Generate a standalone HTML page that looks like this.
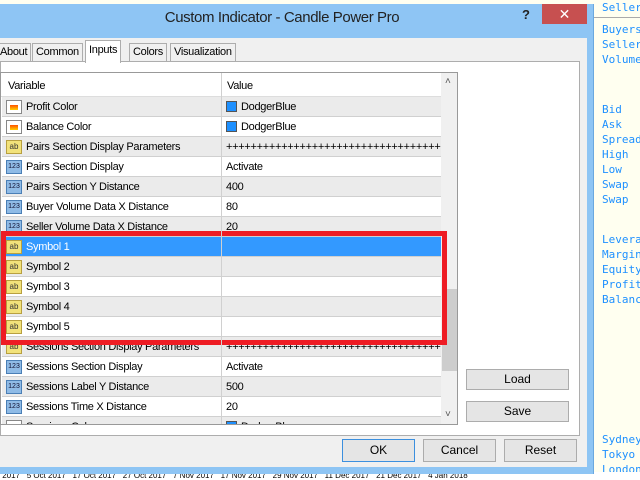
<!DOCTYPE html>
<html><head><style>
*{margin:0;padding:0;box-sizing:border-box}
body{width:640px;height:480px;overflow:hidden;position:relative;background:#fffff0;font-family:"Liberation Sans",sans-serif;font-size:11px;color:#000}
.a{position:absolute}
.chart div{position:absolute;left:602px;font-family:"DejaVu Sans Mono","Liberation Mono",monospace;font-size:11px;color:#1e90ff;white-space:nowrap}
.row{position:absolute;left:1px;width:439px;height:20px;border-bottom:1px solid #d0d0d0;letter-spacing:-0.3px}
.row .n{position:absolute;left:24px;top:4px;white-space:nowrap}
.row .v{position:absolute;left:224px;top:4px;white-space:nowrap}
.row .ic{position:absolute;left:4px;top:3px;width:16px;height:14px;letter-spacing:0}
.ab{background:#f2e27a;border:1px solid #b8a040;font-size:8px;line-height:11px;text-align:center;color:#333}
.n123{background:#8fbbe6;border:1px solid #4a7fb6;font-size:7px;line-height:11px;text-align:center;color:#113}
.col{background:#fff;border:1px solid #888}
.col:after{content:"";position:absolute;left:3px;top:4px;width:8px;height:5px;background:linear-gradient(#ff5000,#ffd000)}
.sw{display:inline-block;width:11px;height:11px;background:#1e90ff;border:1px solid #555;vertical-align:-2px;margin-right:4px}
.btn{position:absolute;background:#e5e5e5;border:1px solid #acacac;text-align:center;line-height:19px;font-size:12px}
.tab{position:absolute;top:43px;height:19px;border:1px solid #adadad;background:#f0f0f0;padding:0 3px;line-height:17px;font-size:11px;letter-spacing:-0.3px}
</style></head><body>
<div class="chart">
<div style="top:1px">Seller</div>
<div class="a" style="left:594px;top:17px;width:46px;height:1px;background:#aaa"></div>
<div style="top:23px">Buyers</div><div style="top:38px">Seller</div><div style="top:53px">Volume</div>
<div style="top:103px">Bid</div><div style="top:118px">Ask</div><div style="top:133px">Spread</div><div style="top:148px">High</div><div style="top:163px">Low</div><div style="top:178px">Swap</div><div style="top:193px">Swap</div>
<div style="top:233px">Leverage</div><div style="top:248px">Margin</div><div style="top:263px">Equity</div><div style="top:278px">Profit</div><div style="top:293px">Balance</div>
<div style="top:433px">Sydney</div><div style="top:448px">Tokyo</div><div style="top:463px">London</div>
</div>
<div class="a" style="left:0;top:472px;width:640px;height:8px;background:#fff;font-size:8px;line-height:8px;color:#000;white-space:nowrap;overflow:hidden">&nbsp;2017 &nbsp; 5 Oct 2017 &nbsp; 17 Oct 2017 &nbsp; 27 Oct 2017 &nbsp; 7 Nov 2017 &nbsp; 17 Nov 2017 &nbsp; 29 Nov 2017 &nbsp; 11 Dec 2017 &nbsp; 21 Dec 2017 &nbsp; 4 Jan 2018</div>
<div class="a" style="left:0;top:4px;width:594px;height:470px;background:#8ec5f4;border-right:1px solid #6aa8df"></div>
<div class="a" style="left:0;top:9px;width:564px;text-align:center;font-size:15px;color:#222;letter-spacing:-0.4px">Custom Indicator - Candle Power Pro</div>
<div class="a" style="left:522px;top:7px;font-size:13px;font-weight:bold;color:#222">?</div>
<div class="a" style="left:542px;top:4px;width:45px;height:20px;background:#c75050;color:#fff;text-align:center;font-size:14px;line-height:20px">✕</div>
<div class="a" style="left:0;top:38px;width:587px;height:429px;background:#f0f0f0"></div>
<div class="a" style="left:0;top:61px;width:580px;height:375px;background:#fff;border:1px solid #adadad"></div>
<div class="tab" style="left:-4px">About</div>
<div class="tab" style="left:32px">Common</div>
<div class="tab" style="left:85px;top:40px;height:23px;background:#fff;border-bottom:none;padding-top:1px">Inputs</div>
<div class="tab" style="left:129px">Colors</div>
<div class="tab" style="left:170px">Visualization</div>
<div class="a" style="left:0;top:72px;width:458px;height:353px;border:1px solid #999;background:#fff;overflow:hidden">
<div class="a" style="left:0;top:0;width:440px;height:24px;border-bottom:1px solid #ddd;background:#fff;letter-spacing:-0.3px"><span class="a" style="left:7px;top:7px">Variable</span><span class="a" style="left:226px;top:7px">Value</span></div>
<div class="a" style="left:220px;top:0;width:1px;height:360px;background:#d0d0d0;z-index:2"></div>
<div class="row" style="top:24px;background:#ebebeb"><div class="ic col"></div><span class="n">Profit Color</span><span class="v"><i class="sw"></i>DodgerBlue</span></div>
<div class="row" style="top:44px"><div class="ic col"></div><span class="n">Balance Color</span><span class="v"><i class="sw"></i>DodgerBlue</span></div>
<div class="row" style="top:64px;background:#ebebeb"><div class="ic ab">ab</div><span class="n">Pairs Section Display Parameters</span><span class="v">++++++++++++++++++++++++++++++++++++</span></div>
<div class="row" style="top:84px"><div class="ic n123">123</div><span class="n">Pairs Section Display</span><span class="v">Activate</span></div>
<div class="row" style="top:104px;background:#ebebeb"><div class="ic n123">123</div><span class="n">Pairs Section Y Distance</span><span class="v">400</span></div>
<div class="row" style="top:124px"><div class="ic n123">123</div><span class="n">Buyer Volume Data X Distance</span><span class="v">80</span></div>
<div class="row" style="top:144px;background:#ebebeb"><div class="ic n123">123</div><span class="n">Seller Volume Data X Distance</span><span class="v">20</span></div>
<div class="row" style="top:164px;background:#3399ff;color:#fff"><div class="ic ab">ab</div><span class="n">Symbol 1</span></div>
<div class="row" style="top:184px;background:#ebebeb"><div class="ic ab">ab</div><span class="n">Symbol 2</span></div>
<div class="row" style="top:204px"><div class="ic ab">ab</div><span class="n">Symbol 3</span></div>
<div class="row" style="top:224px;background:#ebebeb"><div class="ic ab">ab</div><span class="n">Symbol 4</span></div>
<div class="row" style="top:244px"><div class="ic ab">ab</div><span class="n">Symbol 5</span></div>
<div class="row" style="top:264px;background:#ebebeb"><div class="ic ab">ab</div><span class="n">Sessions Section Display Parameters</span><span class="v">++++++++++++++++++++++++++++++++++++</span></div>
<div class="row" style="top:284px"><div class="ic n123">123</div><span class="n">Sessions Section Display</span><span class="v">Activate</span></div>
<div class="row" style="top:304px;background:#ebebeb"><div class="ic n123">123</div><span class="n">Sessions Label Y Distance</span><span class="v">500</span></div>
<div class="row" style="top:324px"><div class="ic n123">123</div><span class="n">Sessions Time X Distance</span><span class="v">20</span></div>
<div class="row" style="top:344px;background:#ebebeb"><div class="ic col"></div><span class="n">Sessions Color</span><span class="v"><i class="sw"></i>DodgerBlue</span></div>
<div class="a" style="left:440px;top:0;width:17px;height:352px;background:#f0f0f0"></div>
<div class="a" style="left:441px;top:216px;width:15px;height:82px;background:#cdcdcd"></div>
<div class="a" style="left:444px;top:3px;font-size:10px;color:#555">˄</div>
<div class="a" style="left:444px;top:336px;font-size:10px;color:#555">˅</div>
</div>
<div class="a" style="left:1px;top:231px;width:446px;height:114px;border:5px solid #ee1c24"></div>
<div class="btn" style="left:466px;top:369px;width:103px;height:21px">Load</div>
<div class="btn" style="left:466px;top:401px;width:103px;height:21px">Save</div>
<div class="btn" style="left:342px;top:439px;width:73px;height:23px;border-color:#3c8fde;line-height:21px">OK</div>
<div class="btn" style="left:423px;top:439px;width:73px;height:23px;line-height:21px">Cancel</div>
<div class="btn" style="left:504px;top:439px;width:73px;height:23px;line-height:21px">Reset</div>
</body></html>
